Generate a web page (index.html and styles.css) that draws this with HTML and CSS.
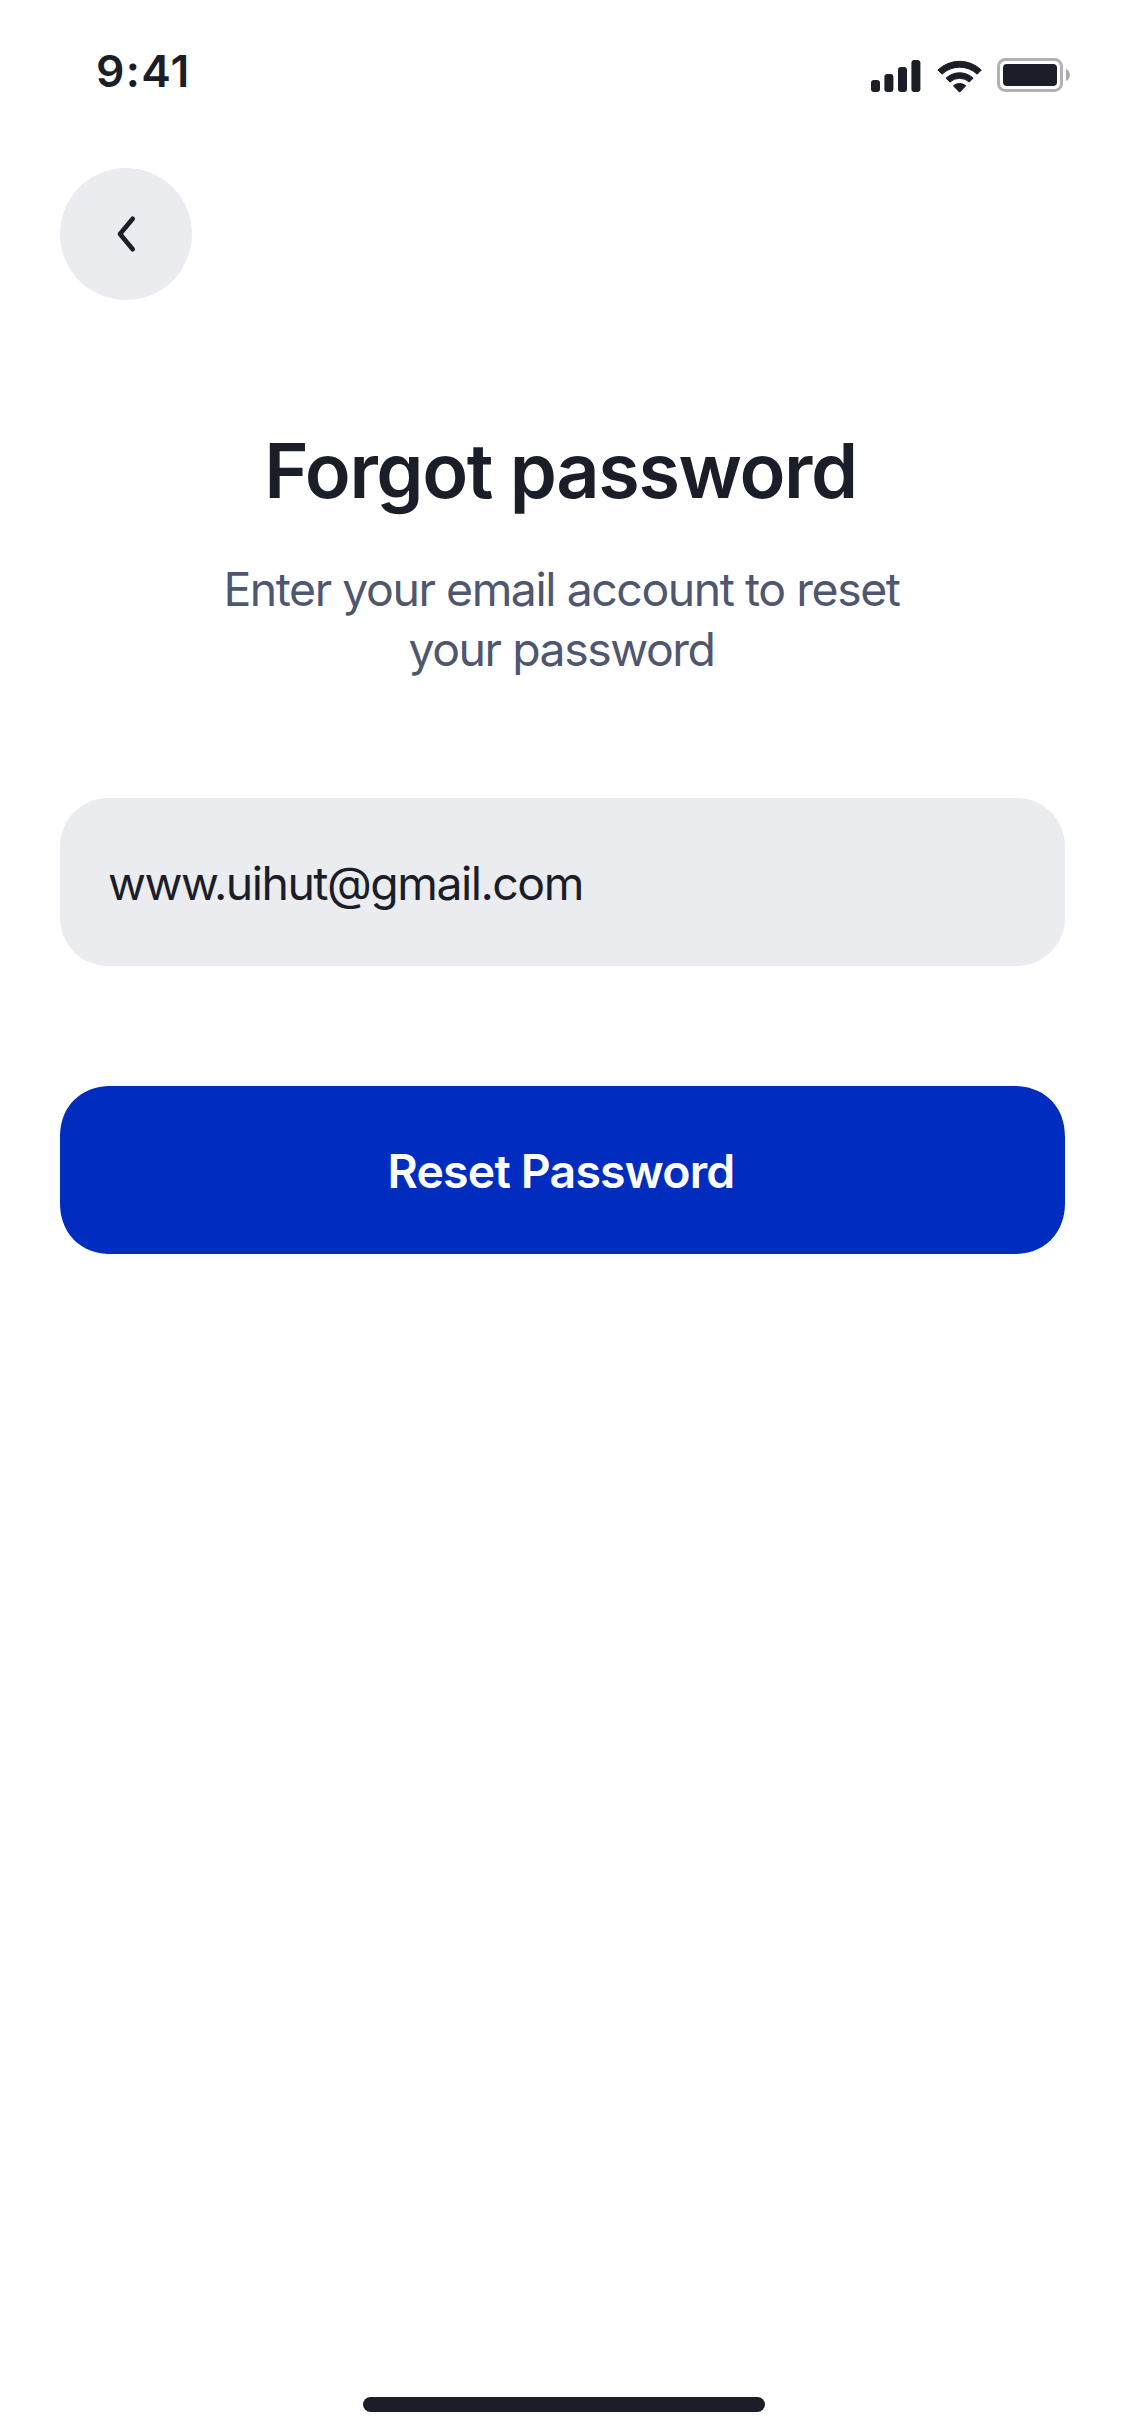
FILE: index.html
```html
<!DOCTYPE html>
<html lang="en">
<head>
<meta charset="utf-8">
<title>Forgot password</title>
<link rel="stylesheet" href="styles.css">
</head>
<body>
<div class="screen">
  <header class="status-bar">
    <span class="time">9:41</span>
    <svg class="status-icons" width="200" height="36" viewBox="0 0 200 36">
      <g fill="#1b1e28">
        <rect x="1" y="23" width="9" height="12" rx="3"/>
        <rect x="14.4" y="17" width="9" height="18" rx="3"/>
        <rect x="28" y="10" width="9" height="25" rx="3"/>
        <rect x="41.4" y="3" width="9" height="32" rx="3"/>
      </g>
      <g fill="#1b1e28" stroke="#1b1e28" stroke-width="1" stroke-linejoin="round">
        <path d="M67.9 13A31.4 31.4 0 0 1 111.3 13L107.2 17.2A25.6 25.6 0 0 0 72 17.2Z"/>
        <path d="M76 21.2A19.8 19.8 0 0 1 103.2 21.2L99.2 25A14.3 14.3 0 0 0 80 25Z"/>
        <path d="M83.4 28.8A9.5 9.5 0 0 1 95.8 28.8L89.6 35.2Z"/>
      </g>
      <rect x="128.5" y="2.5" width="63" height="31" rx="7" fill="none" stroke="#b0b0b5" stroke-width="3"/>
      <rect x="133" y="7" width="54" height="22" rx="4" fill="#1b1e28"/>
      <path d="M196 12A6.6 6.6 0 0 1 196 24Z" fill="#a9a9af"/>
    </svg>
  </header>

  <nav class="top-nav">
    <button class="back" type="button" aria-label="Back">
      <svg width="24" height="40" viewBox="0 0 24 40"><path d="M18.7 4.7L6 20L18.7 35.3" fill="none" stroke="#1b1e28" stroke-width="4.7" stroke-linecap="round" stroke-linejoin="round"/></svg>
    </button>
  </nav>

  <main class="content">
    <h1 class="title">Forgot password</h1>
    <p class="subtitle">Enter your email account to reset<br>your password</p>
    <input class="email" type="email" value="www.uihut@gmail.com" aria-label="Email">
    <button class="submit" type="button">Reset Password</button>
  </main>

  <footer class="home-area"><div class="home-indicator"></div></footer>
</div>
</body>
</html>
```
FILE: styles.css
```css
* { box-sizing: border-box; margin: 0; padding: 0; }
body { background: #fff; font-family: Inter, "Liberation Sans", sans-serif; color: #1b1e28; }
button, input { border: 0; font: inherit; color: inherit; outline: none; }

.screen { width: 1125px; height: 2436px; display: flex; flex-direction: column; background: #fff; }

.status-bar { height: 132px; display: flex; justify-content: space-between; align-items: flex-start; padding: 43px 55px 0 96px; }
.time { font-size: 44.4px; line-height: 56px; font-weight: 600; letter-spacing: 1.3px; }
.status-icons { margin-top: 14px; }

.top-nav { padding: 36px 60px 0; display: flex; }
.back { width: 132px; height: 132px; border-radius: 50%; background: #ebecf0; display: flex; align-items: center; justify-content: center; }

.content { padding: 120px 60px 0; display: flex; flex-direction: column; }
.title { padding-right: 4px; text-align: center; font-size: 75.6px; line-height: 102px; font-weight: 600; letter-spacing: -1.4px; }
.subtitle { margin-top: 37px; padding-right: 2px; text-align: center; font-size: 46.4px; line-height: 60px; font-weight: 400; letter-spacing: -1.44px; color: #4f566f; }
.email, .submit { width: 100%; height: 168px; border-radius: 48px; }
.email { margin-top: 119px; padding: 1px 48px 0; background: #ebecf0; font-size: 46.4px; letter-spacing: -1.5px; }
.submit { margin-top: 120px; padding: 1px 3px 0 0; background: #002dbf; color: #fff; text-align: center; font-size: 46.4px; font-weight: 600; letter-spacing: -0.8px; }

@supports (corner-shape: superellipse(1.1)) {
  .submit { border-radius: 51px; corner-shape: superellipse(1.1); }
}

.home-area { margin-top: auto; padding-bottom: 24px; display: flex; justify-content: center; }
.home-indicator { width: 402px; height: 15px; margin-left: 3px; border-radius: 8px; background: #1b1e28; }
```
